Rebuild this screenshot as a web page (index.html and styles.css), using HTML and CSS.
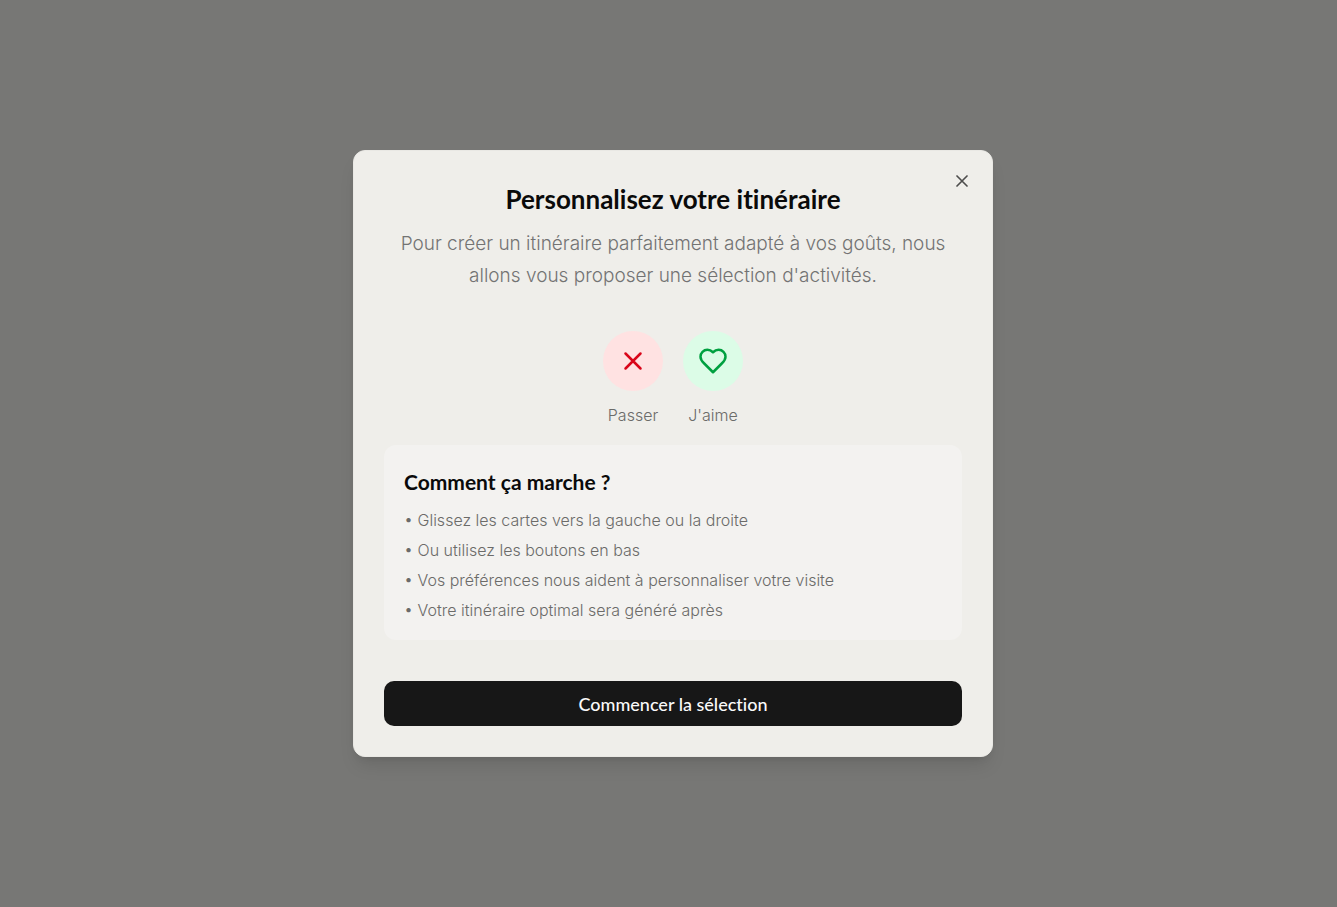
FILE: index.html
```html
<!DOCTYPE html>
<html lang="fr">
<head>
<meta charset="utf-8">
<meta name="viewport" content="width=device-width, initial-scale=1">
<title>Personnalisez votre itinéraire</title>
<link rel="stylesheet" href="styles.css">
</head>
<body>
<div class="overlay">
  <section class="dialog" role="dialog" aria-modal="true" aria-labelledby="dialog-title" aria-describedby="dialog-description">
    <button class="close" type="button" aria-label="Fermer">
      <svg viewBox="0 0 24 24" aria-hidden="true"><path d="M18 6 6 18M6 6l12 12"/></svg>
    </button>
    <header class="header">
      <h1 class="title" id="dialog-title">Personnalisez votre itinéraire</h1>
      <p class="description" id="dialog-description">Pour créer un itinéraire parfaitement adapté à vos goûts, nous allons vous proposer une sélection d'activités.</p>
    </header>
    <div class="choices">
      <div class="choice">
        <span class="badge badge-pass"><svg viewBox="0 0 24 24" aria-hidden="true"><path d="M18 6 6 18M6 6l12 12"/></svg></span>
        <span>Passer</span>
      </div>
      <div class="choice">
        <span class="badge badge-like"><svg viewBox="0 0 24 24" aria-hidden="true"><path d="M19 14c1.49-1.46 3-3.21 3-5.5A5.5 5.5 0 0 0 16.5 3c-1.76 0-3 .5-4.5 2-1.5-1.5-2.74-2-4.5-2A5.5 5.5 0 0 0 2 8.5c0 2.3 1.5 4.05 3 5.5l7 7Z"/></svg></span>
        <span>J'aime</span>
      </div>
    </div>
    <div class="help">
      <h2 class="help-title">Comment ça marche ?</h2>
      <ul class="help-list">
        <li>• Glissez les cartes vers la gauche ou la droite</li>
        <li>• Ou utilisez les boutons en bas</li>
        <li>• Vos préférences nous aident à personnaliser votre visite</li>
        <li>• Votre itinéraire optimal sera généré après</li>
      </ul>
    </div>
    <button class="start" type="button">Commencer la sélection</button>
  </section>
</div>
</body>
</html>
```
FILE: styles.css
```css
* { box-sizing: border-box; }

body {
  margin: 0;
  background: #777775;
  color: #0a0a0a;
  font-family: Inter, "Liberation Sans", sans-serif;
}

h1, h2, p, ul { margin: 0; padding: 0; }

.overlay {
  display: flex;
  align-items: center;
  justify-content: center;
  min-height: 100vh;
  padding-left: 9px;
}

.dialog {
  position: relative;
  width: 100%;
  max-width: 640px;
  padding: 30px;
  border: 1px solid #e9e8e4;
  border-radius: 12px;
  background: #efeeea;
  box-shadow: 0 12px 18px -4px rgb(0 0 0 / 10%), 0 5px 8px -5px rgb(0 0 0 / 10%);
}

.close {
  position: absolute;
  top: 20px;
  right: 20px;
  display: flex;
  padding: 0;
  border: 0;
  background: none;
  color: #0a0a0a;
  opacity: 0.7;
}

svg {
  fill: none;
  stroke: currentColor;
  stroke-width: 2;
  stroke-linecap: round;
  stroke-linejoin: round;
}

.close svg { width: 20px; height: 20px; }

.header { text-align: center; }

.title,
.help-title,
.start {
  font-family: Lato, "Liberation Sans", sans-serif;
  font-variant-ligatures: none;
}

.title {
  font-size: 26px;
  font-weight: 700;
  line-height: 36px;
}

.description {
  margin-top: 11px;
  color: #737373;
  font-size: 19px;
  font-weight: 300;
  line-height: 32px;
}

.choices {
  display: flex;
  justify-content: center;
  gap: 20px;
  margin-top: 39px;
}

.choice {
  display: flex;
  flex-direction: column;
  align-items: center;
  gap: 10px;
  color: #6b6b69;
  font-size: 16px;
  font-weight: 300;
  line-height: 28px;
}

.badge {
  display: flex;
  align-items: center;
  justify-content: center;
  width: 60px;
  height: 60px;
  border-radius: 50%;
}

.badge svg { width: 30px; height: 30px; }
.badge-pass { background: #ffe2e2; color: #d9061a; }
.badge-like { background: #dcfce7; color: #00a040; }

.help {
  margin-top: 16px;
  padding: 22px 20px 17px;
  border-radius: 12px;
  background: #f3f2f0;
}

.help-title {
  font-size: 21px;
  font-weight: 700;
  line-height: 30px;
}

.help-list {
  display: flex;
  flex-direction: column;
  gap: 5px;
  margin-top: 11px;
  color: #6b6b69;
  font-size: 16px;
  font-weight: 300;
  line-height: 25px;
  list-style: none;
}

.start {
  width: 100%;
  height: 45px;
  margin-top: 41px;
  border: 0;
  border-radius: 10px;
  background: #171717;
  color: #fafafa;
  font-size: 18px;
  font-weight: 500;
}
```
